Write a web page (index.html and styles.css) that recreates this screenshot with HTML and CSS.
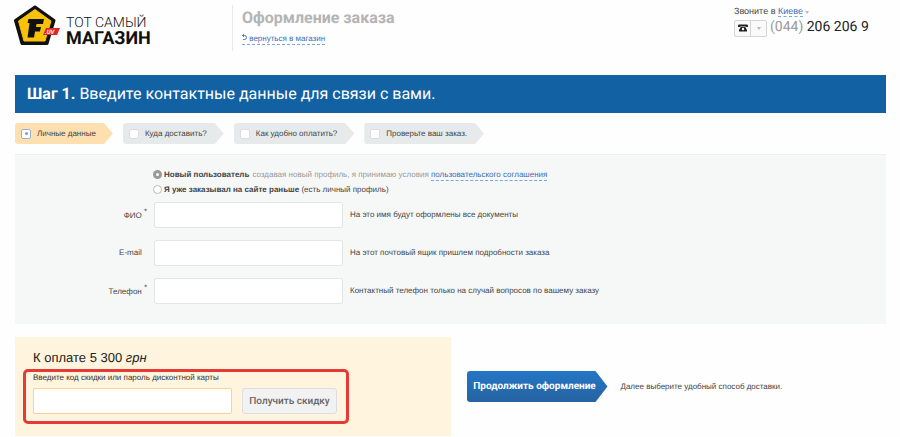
FILE: index.html
```html
<!DOCTYPE html>
<html lang="ru">
<head>
  <meta charset="UTF-8">
  <meta name="viewport" content="width=device-width, initial-scale=1.0">
  <title>Оформление заказа - Тот самый магазин</title>
  <link rel="stylesheet" href="styles.css">
</head>
<body>
  <header class="header">
    <a href="#" class="logo">
      <svg class="logo-icon" width="46" height="42" viewBox="0 0 46 42">
        <polygon points="21,2 40,15.500 33,38.500 8,38.500 1.500,15.500" fill="#111" stroke="#111" stroke-width="3" stroke-linejoin="round"/>
        <polygon points="21,4.500 37,16 31,36 10,36 4.500,16" fill="#f9c20a" stroke="#f9c20a" stroke-linejoin="round"/>
        <path d="M14.500 14H30L29 19H22.500L22 22H27L26 26.500H21L20 32.500H13.500L15.500 18H13.500Z" fill="#111"/>
        <polygon points="32,23 46,23 43,30 29,30" fill="#e0262b"/>
        <text x="31" y="29" class="logo-tag">.UV</text>
      </svg>
      <span class="logo-text">
        <span class="logo-top">ТОТ САМЫЙ</span>
        <span class="logo-bottom">МАГАЗИН</span>
      </span>
    </a>

    <div class="header-title">
      <h1>Оформление заказа</h1>
      <a href="#" class="back-link">
        <svg width="5" height="7" viewBox="0 0 5 7"><path d="M0.500 1.500H2.500A2 2 0 0 1 2.500 5.500H1M2 0L0.500 1.500L2 3" fill="none" stroke="#3a6fb5" stroke-width="0.900"/></svg>
        вернуться в магазин</a>
    </div>

    <div class="contacts">
      <div class="city">Звоните в <a href="#">Киеве</a> <span class="caret"></span></div>
      <div class="phone-row">
        <button type="button" class="phone-btn" aria-label="Выбрать телефон">
          <span class="phone-icon">
            <svg width="10" height="8" viewBox="0 0 10 8"><path d="M0 3V1.500Q0 0.500 1.500 0.500H8.500Q10 0.500 10 1.500V3H7.500V2H2.500V3ZM3 2.500H7L9 6V7.500H1V6Z" fill="#222"/><circle cx="5" cy="5" r="1.200" fill="#fff"/></svg>
          </span>
          <span class="phone-arrow"><span class="caret"></span></span>
        </button>
        <span class="phone"><span class="phone-code">(044)</span> 206 206 9</span>
      </div>
    </div>
  </header>

  <main class="content">
    <h2 class="banner"><b>Шаг 1.</b> Введите контактные данные для связи с вами.</h2>

    <ol class="steps">
      <li class="step active"><span class="step-box"></span>Личные данные</li>
      <li class="step"><span class="step-box"></span>Куда доставить?</li>
      <li class="step"><span class="step-box"></span>Как удобно оплатить?</li>
      <li class="step"><span class="step-box"></span>Проверьте ваш заказ.</li>
    </ol>

    <form class="user-form">
      <div class="user-type">
        <div class="radio-row">
          <input type="radio" id="newUser" name="user" checked>
          <label for="newUser"><b>Новый пользователь</b></label>
          <span class="terms">создавая новый профиль, я принимаю условия <a href="#">пользовательского соглашения</a></span>
        </div>
        <div class="radio-row">
          <input type="radio" id="oldUser" name="user">
          <label for="oldUser"><b>Я уже заказывал на сайте раньше</b> (есть личный профиль)</label>
        </div>
      </div>

      <div class="form-group">
        <label for="name">ФИО <sup>*</sup></label>
        <input type="text" id="name" name="name">
        <span class="hint">На это имя будут оформлены все документы</span>
      </div>
      <div class="form-group">
        <label for="email">E-mail <sup></sup></label>
        <input type="email" id="email" name="email">
        <span class="hint">На этот почтовый ящик пришлем подробности заказа</span>
      </div>
      <div class="form-group">
        <label for="tel">Телефон <sup>*</sup></label>
        <input type="tel" id="tel" name="tel">
        <span class="hint">Контактный телефон только на случай вопросов по вашему заказу</span>
      </div>
    </form>

    <div class="bottom">
      <section class="payment">
        <p class="total">К оплате 5 300 <i>грн</i></p>
        <form class="discount">
          <label for="code">Введите код скидки или пароль дисконтной карты</label>
          <div class="discount-row">
            <input type="text" id="code" name="code">
            <button type="submit" class="discount-btn">Получить скидку</button>
          </div>
        </form>
      </section>

      <div class="next">
        <button type="button" class="next-btn">Продолжить оформление</button>
        <span class="hint">Далее выберите удобный способ доставки.</span>
      </div>
    </div>
  </main>
</body>
</html>
```
FILE: styles.css
```css
* {
  margin: 0;
  padding: 0;
  box-sizing: border-box;
}

body {
  background-color: #fefefe;
  color: #444;
  font-family: 'Liberation Sans', Arial, sans-serif;
  font-size: 8px;
  line-height: 12px;
  text-rendering: geometricPrecision;
}

a {
  color: #3a6fb5;
  text-decoration: none;
  border-bottom: 1px dashed #7ba7dc;
}

input,
button {
  font-family: inherit;
  text-rendering: inherit;
}

/* Header */
.header {
  display: flex;
  height: 75px;
  padding: 5px 14px 0;
}

.logo {
  display: flex;
  width: 218px;
  border: none;
}

.logo-tag {
  font: italic bold 6px Roboto, sans-serif;
  fill: #fff;
}

.logo-text {
  display: flex;
  flex-direction: column;
  padding: 11px 0 0 6px;
  font-family: Roboto, sans-serif;
  color: #111;
}

.logo-top {
  font-size: 14px;
  font-weight: 300;
  line-height: 14px;
}

.logo-bottom {
  font-size: 18px;
  font-weight: bold;
  line-height: 18px;
}

.header-title {
  height: 46px;
  padding-left: 9px;
  border-left: 1px solid #e8e8e8;
}

.header-title h1 {
  font-family: Roboto, sans-serif;
  font-size: 16px;
  line-height: 26px;
  color: #b4b4b4;
}

.back-link {
  display: inline-block;
  margin-top: 3px;
  line-height: 10px;
}

.contacts {
  width: 152px;
  margin-left: auto;
}

.city {
  font-size: 9px;
}

.city a {
  display: inline-block;
  line-height: 10px;
}

.caret {
  display: inline-block;
  border: 2px solid transparent;
  border-top: 3px solid #bbb;
  border-bottom: none;
}

.phone-row {
  display: flex;
  align-items: center;
  gap: 3px;
}

.phone-btn {
  display: flex;
  width: 33px;
  height: 17px;
  margin-top: 2px;
  border: 1px solid #d5d5d5;
  border-radius: 2px;
  background-color: #fafafa;
}

.phone-icon,
.phone-arrow {
  display: flex;
  flex: 1;
  height: 100%;
  align-items: center;
  justify-content: center;
}

.phone-arrow {
  border-left: 1px solid #d5d5d5;
}

.phone {
  font-family: Roboto, sans-serif;
  font-size: 14px;
  line-height: 20px;
  color: #222;
}

.phone-code {
  color: #999;
}

/* Content */
.content {
  padding: 0 14px 0 15px;
}

.banner {
  padding-left: 12px;
  background-color: #1262a3;
  color: #fff;
  font-family: Roboto, sans-serif;
  font-size: 16px;
  font-weight: normal;
  line-height: 38px;
}

.steps {
  display: flex;
  gap: 10px;
  margin: 10px 0;
  list-style: none;
}

.step {
  display: flex;
  align-items: center;
  gap: 6px;
  height: 21px;
  padding: 0 17px 0 6px;
  border-radius: 3px;
  background-color: #e6eaeb;
  clip-path: polygon(0 0, calc(100% - 9px) 0, 100% 50%, calc(100% - 9px) 100%, 0 100%);
}

.step-box {
  display: flex;
  align-items: center;
  justify-content: center;
  width: 10px;
  height: 10px;
  border: 1px solid #ddd;
  border-radius: 2px;
  background-color: #fff;
}

.active {
  background-color: #fedfaf;
}

.active .step-box {
  border-color: #8fb3d9;
}

.active .step-box::after {
  content: "";
  width: 3px;
  height: 3px;
  border-radius: 50%;
  background-color: #999;
}

/* User form */
.user-form {
  display: flex;
  flex-direction: column;
  gap: 12px;
  padding: 12px 0 20px;
  border-top: 1px solid #eef0f0;
  background-color: #f6f8f8;
}

.user-type {
  margin: 0 0 -7px 138px;
}

.radio-row {
  display: flex;
  align-items: center;
  height: 15px;
}

.radio-row input {
  appearance: none;
  width: 9px;
  height: 9px;
  margin-right: 2px;
  border: 1px solid #bbb;
  border-radius: 50%;
  background-color: #fff;
}

.radio-row input:checked {
  border: 3px solid #999;
}

.terms {
  margin-left: 3px;
  color: #999;
}

.terms a {
  display: inline-block;
  line-height: 10px;
}

.form-group {
  display: grid;
  grid-template-columns: 132px 189px 1fr;
  align-items: center;
  column-gap: 7px;
}

.form-group label {
  text-align: right;
}

.form-group sup {
  display: inline-block;
  width: 3px;
  font-size: 8px;
  line-height: 8px;
}

.form-group input {
  height: 26px;
  padding: 0 6px;
  border: 1px solid #e2e6e6;
  border-radius: 2px;
  background-color: #fff;
}

/* Payment */
.bottom {
  display: flex;
  gap: 16px;
  margin-top: 13px;
}

.payment {
  width: 50%;
  padding: 10px 8px 12px;
  background-color: #fff4dd;
}

.total {
  padding-left: 10px;
  color: #222;
  font-size: 13px;
  line-height: 22px;
}

.discount {
  width: 326px;
  padding: 0 9px 7px 7px;
  border: 3px solid #e53a35;
  border-radius: 5px;
}

.discount label {
  display: block;
  margin-bottom: 4px;
  color: #333;
}

.discount-row {
  display: flex;
  gap: 10px;
}

.discount-row input {
  flex: 1;
  min-width: 0;
  height: 26px;
  padding: 0 6px;
  border: 1px solid #fdd18e;
  border-radius: 2px;
  background-color: #fff;
}

.discount-btn {
  width: 95px;
  height: 26px;
  border: 1px solid #ddd;
  border-radius: 3px;
  background-color: #f2f2f2;
  color: #666;
  font-family: Roboto, sans-serif;
  font-size: 10px;
  font-weight: 500;
}

.next {
  display: flex;
  align-items: center;
  gap: 13px;
}

.next-btn {
  width: 141px;
  height: 31px;
  padding-right: 5px;
  border: none;
  border-radius: 3px;
  background: linear-gradient(#2476c6, #2663a0);
  clip-path: polygon(0 0, calc(100% - 12px) 0, 100% 50%, calc(100% - 12px) 100%, 0 100%);
  color: #fff;
  font-family: Roboto, sans-serif;
  font-size: 10px;
  font-weight: bold;
  white-space: nowrap;
}
```
